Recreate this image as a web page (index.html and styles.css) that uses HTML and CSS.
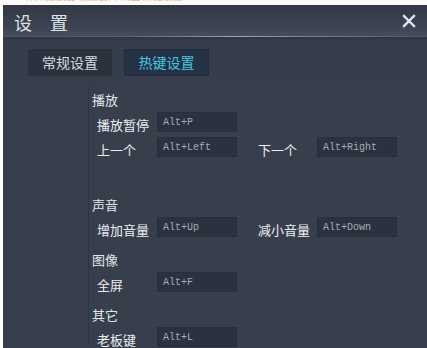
FILE: index.html
```html
<!DOCTYPE html>
<html lang="zh-CN">
<head>
  <meta charset="UTF-8" />
  <meta name="viewport" content="width=device-width, initial-scale=1.0" />
  <title>设置</title>
  <link rel="stylesheet" href="styles.css">
</head>
<body>
  <div class="top-strip"><span>某某播放器 设置窗口 截图 热键设置</span></div>
  <div class="window">
    <div class="title-bar">
      <span class="title">设置</span>
      <svg class="close" width="14" height="14" viewBox="0 0 14 14">
        <path d="M2 2 L12 12 M12 2 L2 12" stroke="#e2e6ee" stroke-width="2.4" stroke-linecap="square" />
      </svg>
    </div>
    <div class="title-rule"></div>

    <div class="tabs">
      <div class="tab">常规设置</div>
      <div class="tab active">热键设置</div>
    </div>

    <div class="panel">
      <div class="side"></div>
      <div class="content">
        <!-- 播放 -->
        <div class="section section-wide">
          <div class="section-title">播放</div>
          <div class="row">
            <span class="label">播放暂停</span>
            <div class="key">Alt+P</div>
          </div>
          <div class="row">
            <span class="label">上一个</span>
            <div class="key">Alt+Left</div>
            <span class="label second">下一个</span>
            <div class="key">Alt+Right</div>
          </div>
        </div>

        <!-- 声音 -->
        <div class="section">
          <div class="section-title">声音</div>
          <div class="row">
            <span class="label">增加音量</span>
            <div class="key">Alt+Up</div>
            <span class="label second">减小音量</span>
            <div class="key">Alt+Down</div>
          </div>
        </div>

        <!-- 图像 -->
        <div class="section">
          <div class="section-title">图像</div>
          <div class="row">
            <span class="label">全屏</span>
            <div class="key">Alt+F</div>
          </div>
        </div>

        <!-- 其它 -->
        <div class="section">
          <div class="section-title">其它</div>
          <div class="row">
            <span class="label">老板键</span>
            <div class="key">Alt+L</div>
          </div>
        </div>
      </div>
    </div>
  </div>
</body>
</html>
```

FILE: styles.css
```css
* {
  box-sizing: border-box;
}
body {
  margin: 0;
  background: #fff;
  font-family: "Noto Sans CJK SC", "Noto Sans", sans-serif;
  overflow: hidden;
}
.top-strip {
  height: 5px;
  overflow: hidden;
  padding-left: 26px;
  background: #fbfbfb;
}
.top-strip span {
  display: block;
  margin-top: -9px;
  font-size: 10px;
  line-height: 10px;
  color: #e2b3a8;
}
.window {
  margin-left: 3px;
  height: 343px;
  background: #373e4c;
  overflow: hidden;
}
.title-bar {
  height: 31px;
  display: flex;
  align-items: center;
  justify-content: space-between;
  padding: 0 11px 0 11px;
  background: linear-gradient(to bottom, #323845, #3b4150 60%, #454c5c);
}
.title {
  font-size: 18px;
  line-height: 20px;
  color: #dde2ea;
  letter-spacing: 18px;
  padding-top: 2px;
}
.close {
  margin-top: 1px;
}
.title-rule {
  height: 1px;
  background: linear-gradient(to right, #4a5262 0%, #5a6374 30%, #9aa4b4 55%, #7d8798 70%, #4c5464 100%);
}
.tabs {
  display: flex;
  gap: 12px;
  padding: 12px 0 0 25px;
  height: 49px;
  background: linear-gradient(to bottom, #2f3542, #363d4b 5px);
}
.tab {
  width: 84px;
  height: 27px;
  line-height: 27px;
  text-align: center;
  font-size: 14px;
  color: #d6dae1;
  background: #2b313d;
}
.tab.active {
  width: 85px;
  color: #41c8e2;
  background: #253145;
  border: 1px solid #222b3a;
  line-height: 25px;
}
.panel {
  display: flex;
  height: 258px;
}
.side {
  width: 85px;
  flex-shrink: 0;
}
.content {
  flex: 1;
  border-left: 1px solid #2e3440;
  padding: 4px 0 0 3px;
}
.section {
  margin-bottom: 13px;
}
.section-wide {
  margin-bottom: 38px;
}
.section-title {
  height: 20px;
  line-height: 20px;
  font-size: 13px;
  color: #e3e6eb;
  margin-bottom: 2px;
}
.row {
  display: flex;
  height: 20px;
  padding-left: 5px;
  margin-bottom: 5px;
}
.row:last-child {
  margin-bottom: 0;
}
.label {
  width: 60px;
  font-size: 13px;
  line-height: 20px;
  padding-top: 3px;
  color: #eceef2;
  white-space: nowrap;
}
.label.second {
  width: 59px;
  margin-left: 21px;
}
.key {
  width: 80px;
  height: 20px;
  display: flex;
  align-items: center;
  padding: 1px 0 0 5px;
  font-family: "Liberation Mono", monospace;
  font-size: 10px;
  color: #a7acb5;
  background: #2b313e;
  border: 1px solid #282e3a;
}
```
